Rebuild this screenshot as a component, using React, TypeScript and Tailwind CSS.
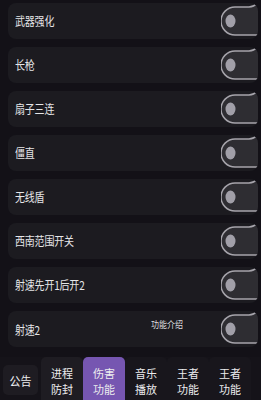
import React from "react";

const rows = [
  "武器强化",
  "长枪",
  "扇子三连",
  "僵直",
  "无线盾",
  "西南范围开关",
  "射速先开1后开2",
  "射速2",
];

const tabs = [
  { label: ["进程", "防封"], active: false },
  { label: ["伤害", "功能"], active: true },
  { label: ["音乐", "播放"], active: false },
  { label: ["王者", "功能"], active: false },
  { label: ["王者", "功能"], active: false },
];

const font = { fontFamily: '"Noto Sans CJK SC", "Noto Sans", sans-serif' };

const Toggle = () => (
  <svg width="37" height="36" viewBox="0 0 37 36" className="shrink-0">
    <path
      d="M37 -1 C34 3 32 4 28 4 H14 A14 14 0 0 0 14 32 H37 Z"
      fill="#2e2d32"
    />
    <path
      d="M37 -1 C34 3 32 4 28 4 H14 A14 14 0 0 0 14 32 H37"
      fill="none"
      stroke="#a6a4ab"
      strokeWidth="1.5"
    />
    <ellipse cx="9.5" cy="18" rx="5" ry="6.5" fill="#a19fa8" />
  </svg>
);

const App = () => {
  return (
    <div
      className="w-[261px] h-[400px] bg-[#131117] overflow-hidden flex flex-col"
      style={font}
    >
      <div className="flex flex-col gap-[8px] pt-[3px] pl-[8px]">
        {rows.map((r, i) => (
          <div
            key={i}
            className="w-[250px] h-[36px] rounded-[8px] bg-[#1c1b20] flex items-center overflow-hidden shrink-0"
          >
            <span
              className={
                "pl-[7px] text-[10px] leading-none text-[#e6e6e8] inline-block scale-y-120 tracking-[-0.2px] " +
                (i === 7 ? "mt-[2px]" : "")
              }
            >
              {r}
            </span>
            {i === 7 && (
              <span className="ml-[111px] mb-[10px] text-[8px] leading-none text-[#dcdcdf] inline-block scale-y-120">
                功能介绍
              </span>
            )}
            <div className="ml-auto">
              <Toggle />
            </div>
          </div>
        ))}
      </div>

      <div className="mt-[10px] flex items-end h-[43px] bg-[#151319]">
        <div className="ml-[3px] mb-[5px] w-[35px] h-[30px] rounded-[5px] bg-[#1e1c22] flex items-center justify-center">
          <span className="text-[11px] leading-none text-[#ededef] inline-block scale-y-110 mt-[3px]">
            公告
          </span>
        </div>
        <div className="ml-[3px] flex">
          {tabs.map((t, i) => (
            <div
              key={i}
              className={
                "w-[42px] h-[43px] rounded-t-[5px] flex flex-col items-center justify-center pt-[4px] " +
                (t.active ? "bg-[#7656b1]" : i === 0 ? "bg-[#1e1c22]" : "bg-[#18161c]")
              }
            >
              {t.label.map((l, j) => (
                <span
                  key={j}
                  className="text-[11px] leading-[16px] text-[#ececee] inline-block scale-y-105"
                >
                  {l}
                </span>
              ))}
            </div>
          ))}
        </div>
      </div>
    </div>
  );
};

export default App;
